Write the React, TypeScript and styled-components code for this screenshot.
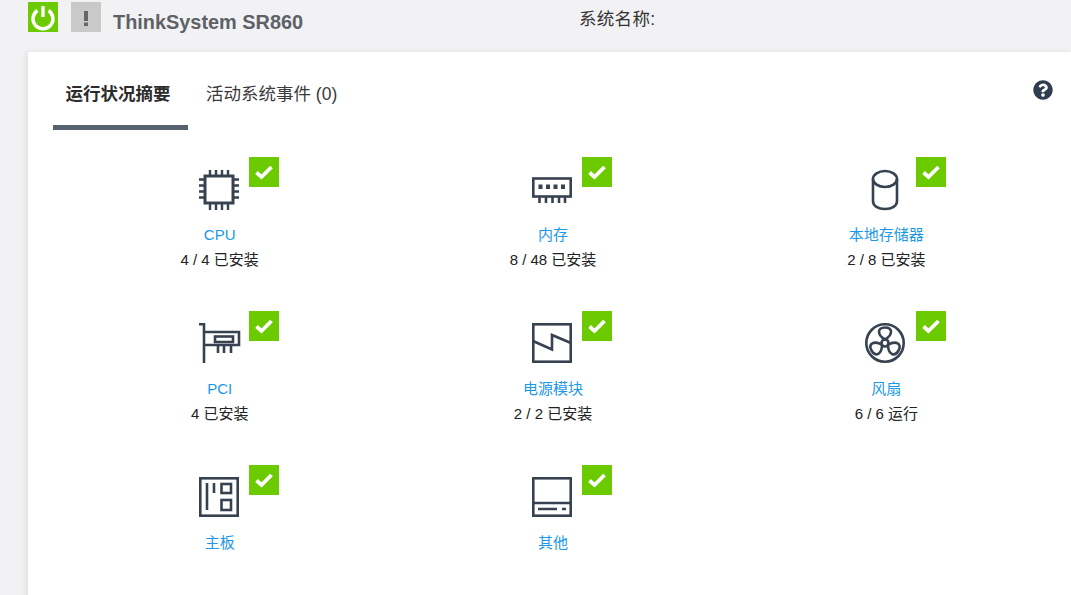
import React from "react";
import styled, { createGlobalStyle } from "styled-components";
import { FaQuestionCircle } from "react-icons/fa";

const Global = createGlobalStyle`
  html, body { margin: 0; padding: 0; height: 100%; overflow: hidden; background: #f2f2f5; }
  body { font-family: "Liberation Sans", "Noto Sans CJK SC", sans-serif; }
`;

const Page = styled.div`
  width: 1071px;
  height: 595px;
  overflow: hidden;
  display: flex;
  flex-direction: column;
  background: #f2f2f5;
`;

const Header = styled.header`
  height: 52px;
  flex: none;
  display: flex;
  align-items: flex-start;
  padding: 2px 0 0 28px;
  box-sizing: border-box;
`;

const StatusTile = styled.div<{ $bg: string }>`
  width: 30px;
  height: 30px;
  flex: none;
  background: ${(p) => p.$bg};
  margin-right: 13px;
  svg { display: block; }
`;

const Title = styled.h1`
  margin: 8px 0 0 -1px;
  width: 466px;
  flex: none;
  font-size: 19.9px;
  line-height: 24px;
  font-weight: 700;
  color: #5e6166;
`;

const SystemName = styled.div`
  margin-top: 5px;
  font-size: 17.5px;
  line-height: 24px;
  letter-spacing: 0.3px;
  color: #333;
`;

const Card = styled.main`
  flex: 1;
  margin-left: 28px;
  padding: 0 18px 0 25px;
  background: #fff;
  box-shadow: -2px 0 6px rgba(0, 0, 0, 0.08);
`;

const TabBar = styled.div`
  height: 78px;
  display: flex;
  align-items: stretch;
`;

const Tab = styled.div<{ $active?: boolean }>`
  padding: 8px ${(p) => (p.$active ? "17.500px 0 12.500px" : "18px 0")};
  display: flex;
  align-items: center;
  font-size: 17.5px;
  font-weight: ${(p) => (p.$active ? 700 : 400)};
  color: ${(p) => (p.$active ? "#2b2b2b" : "#3a3a3a")};
  border-bottom: 5px solid ${(p) => (p.$active ? "#56626e" : "transparent")};
`;

const Help = styled.div`
  margin-left: auto;
  padding-top: 28px;
  color: #2f3e4e;
  font-size: 20px;
  line-height: 20px;
  svg { display: block; }
`;

const Grid = styled.section`
  margin-top: 39px;
  display: grid;
  grid-template-columns: repeat(3, 1fr);
  grid-auto-rows: 154px;
`;

const Item = styled.div`
  display: flex;
  flex-direction: column;
  align-items: center;
`;

const IconWrap = styled.div`
  position: relative;
  width: 42px;
  height: 40px;
  display: flex;
  justify-content: flex-start;
  svg.device { display: block; overflow: visible; }
`;

const Badge = styled.div`
  position: absolute;
  left: 50.4px;
  top: -12px;
  width: 30px;
  height: 30px;
  background: #6bcb00;
  svg { display: block; }
`;

const Label = styled.a`
  margin-top: 13px;
  font-size: 15px;
  line-height: 25px;
  color: #1b98e8;
`;

const Status = styled.div`
  font-size: 15px;
  line-height: 25px;
  color: #222;
`;

const C = "#36424f";

const Svg = ({ children }: { children: React.ReactNode }) => (
  <svg className="device" width="40" height="40" viewBox="0 0 40 40" fill="none" stroke={C} strokeWidth="2.6">
    {children}
  </svg>
);

const Check = () => (
  <svg width="30" height="30" viewBox="0 0 30 30">
    <path d="M7.500 15.500l5 4.500L22.500 10" fill="none" stroke="#fff" strokeWidth="3.8" />
  </svg>
);

const Cpu = () => (
  <Svg>
    <g transform="translate(0 1)">
      <rect x="6" y="6" width="28" height="27" strokeWidth="3" />
      <path d="M11 0v6M17 0v6M23 0v6M29 0v6M11 33v7M17 33v7M23 33v7M29 33v7M0 9.500h6M0 15.500h6M0 21.500h6M0 27.500h6M34 9.500h6M34 15.500h6M34 21.500h6M34 27.500h6" strokeWidth="2.4" />
    </g>
  </Svg>
);
const Memory = () => (
  <Svg>
    <g transform="translate(0 1)">
      <rect x="1.300" y="8.500" width="37.400" height="18" />
      <path d="M7.500 27v6M14 27v6M20.500 27v6M27 27v6M33 27v6" />
      <path d="M6.500 14.500h4v4.500h-4zM14 14.500h4v4.500h-4zM21.500 14.500h4v4.500h-4zM29 14.500h4v4.500h-4z" fill={C} stroke="none" />
    </g>
  </Svg>
);
const Storage = () => (
  <Svg>
    <g transform="translate(0 1)">
      <ellipse cx="20" cy="9" rx="12" ry="8" />
      <path d="M8 9v22c0 5 5 8 12 8s12-3 12-8V9" />
    </g>
  </Svg>
);
const Pci = () => (
  <Svg>
    <path d="M0 1.300h5v38.700M5 9h35v13H5" />
    <rect x="16" y="13.500" width="18" height="5.500" />
    <path d="M19 22v8M25 22v8M32 22v8" />
  </Svg>
);
const Power = () => (
  <Svg>
    <rect x="1.300" y="1.300" width="37.400" height="37.400" />
    <path d="M1 18l19 8.500V12l19 8" />
  </Svg>
);
const LOBE = "M20 16.500C12 12 12 4.500 20 4.500C28 4.500 28 12 20 16.500z";
const Fan = () => (
  <Svg>
    <circle cx="20" cy="20" r="18.700" />
    <circle cx="20" cy="20" r="3.500" />
    <path d={LOBE} />
    <path transform="rotate(120 20 20)" d={LOBE} />
    <path transform="rotate(240 20 20)" d={LOBE} />
  </Svg>
);
const Board = () => (
  <Svg>
    <rect x="1.300" y="1.300" width="37.400" height="37.400" />
    <path d="M8 6v27M15 6v10" />
    <rect x="22.500" y="7" width="9.500" height="9" />
    <rect x="22.500" y="23" width="9.500" height="10" />
  </Svg>
);
const Other = () => (
  <Svg>
    <rect x="1.300" y="1.300" width="37.400" height="37.400" />
    <path d="M1 26h38M6 32h19M30 32h4" />
  </Svg>
);

const items: { icon: React.ReactNode; label: string; status?: string }[] = [
  { icon: <Cpu />, label: "CPU", status: "4 / 4 已安装" },
  { icon: <Memory />, label: "内存", status: "8 / 48 已安装" },
  { icon: <Storage />, label: "本地存储器", status: "2 / 8 已安装" },
  { icon: <Pci />, label: "PCI", status: "4 已安装" },
  { icon: <Power />, label: "电源模块", status: "2 / 2 已安装" },
  { icon: <Fan />, label: "风扇", status: "6 / 6 运行" },
  { icon: <Board />, label: "主板" },
  { icon: <Other />, label: "其他" },
];

export default function App() {
  return (
    <Page>
      <Global />
      <Header>
        <StatusTile $bg="#6bcb00">
          <svg width="30" height="30" viewBox="0 0 30 30" fill="none" stroke="#fff" strokeWidth="3.400">
            <path d="M9.500 8.500a10 10 0 1 0 11 0" />
            <path d="M15 4v11" />
          </svg>
        </StatusTile>
        <StatusTile $bg="#c9c9c9">
          <svg width="30" height="30" viewBox="0 0 30 30" fill="#666">
            <path d="M13 9h4v10h-4zM13 20.500h4V24h-4z" />
          </svg>
        </StatusTile>
        <Title>ThinkSystem SR860</Title>
        <SystemName>系统名称:</SystemName>
      </Header>
      <Card>
        <TabBar>
          <Tab $active>运行状况摘要</Tab>
          <Tab>活动系统事件 (0)</Tab>
          <Help>
            <FaQuestionCircle />
          </Help>
        </TabBar>
        <Grid>
          {items.map((it) => (
            <Item key={it.label}>
              <IconWrap>
                {it.icon}
                <Badge>
                  <Check />
                </Badge>
              </IconWrap>
              <Label>{it.label}</Label>
              {it.status && <Status>{it.status}</Status>}
            </Item>
          ))}
        </Grid>
      </Card>
    </Page>
  );
}
